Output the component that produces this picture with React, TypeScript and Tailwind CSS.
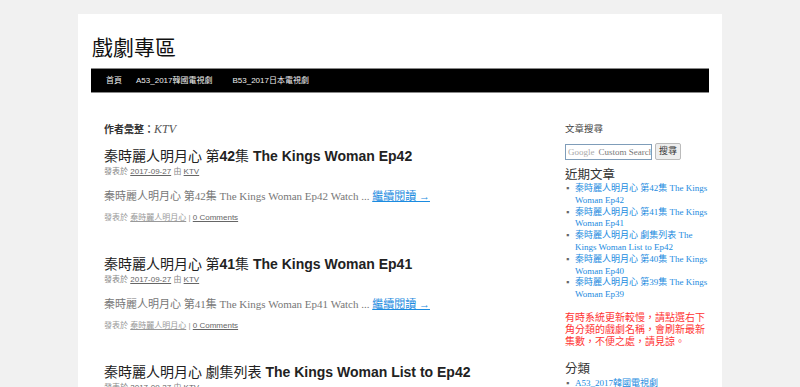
const serif = "font-['Liberation_Serif','Noto_Sans_CJK_TC',serif]";
const sans = "font-['Liberation_Sans','Noto_Sans_CJK_TC',sans-serif]";

type Post = { cjk: string; ep?: string; tail?: string; en: string; excerpt: string; hasEx: boolean };

const posts: Post[] = [
  { cjk: "秦時麗人明月心 第", ep: "42", tail: "集", en: "The Kings Woman Ep42", excerpt: "秦時麗人明月心 第42集 The Kings Woman Ep42 Watch ...", hasEx: true },
  { cjk: "秦時麗人明月心 第", ep: "41", tail: "集", en: "The Kings Woman Ep41", excerpt: "秦時麗人明月心 第41集 The Kings Woman Ep41 Watch ...", hasEx: true },
  { cjk: "秦時麗人明月心 劇集列表", en: "The Kings Woman List to Ep42", excerpt: "", hasEx: false },
];

const recent = [
  "秦時麗人明月心 第42集 The Kings Woman Ep42",
  "秦時麗人明月心 第41集 The Kings Woman Ep41",
  "秦時麗人明月心 劇集列表 The Kings Woman List to Ep42",
  "秦時麗人明月心 第40集 The Kings Woman Ep40",
  "秦時麗人明月心 第39集 The Kings Woman Ep39",
];

function PostItem({ p }: { p: Post }) {
  return (
    <article className="mb-[31px]">
      <h2 className="text-[14px] leading-[18px] text-[#222]">
        <span className={`${serif} font-normal`}>{p.cjk}</span>
        {p.ep && <span className={`${sans} font-bold`}>{p.ep}</span>}
        {p.tail && <span className={`${serif} font-normal`}>{p.tail}</span>}
        <span className={`${sans} font-bold`}> {p.en}</span>
      </h2>
      <div className={`${sans} text-[8px] leading-[12px] text-[#888]`}>
        發表於 <a className="text-[#666] underline">2017-09-27</a> 由 <a className="text-[#666] underline">KTV</a>
      </div>
      {p.hasEx && (
        <>
          <p className={`${serif} mt-[11px] text-[11px] leading-[14px] text-[#777]`}>
            {p.excerpt} <a className="text-[#1b8be0] underline">繼續閱讀 →</a>
          </p>
          <div className={`${sans} mt-[9px] text-[8px] leading-[12px] text-[#999]`}>
            發表於 <a className="text-[#999] underline">秦時麗人明月心</a> | <a className="text-[#666] underline">0 Comments</a>
          </div>
        </>
      )}
    </article>
  );
}

export default function App() {
  return (
    <div className="min-h-screen bg-[#f1f1f1] pt-[14px]">
      <div className="mx-auto w-[644px] bg-white px-[13px] pb-10">
        <header className="pt-[21px]">
          <h1 className={`${serif} text-[21px] leading-[26px] text-[#111] pl-[1px]`}>戲劇專區</h1>
          <nav className={`${sans} mt-[7px] flex h-[25px] items-center border-y border-[#888] bg-black pl-[15px] text-[8px] text-[#eee]`}>
            <a className="mr-[14px]">首頁</a>
            <a className="mr-[20px]">A53_2017韓國電視劇</a>
            <a>B53_2017日本電視劇</a>
          </nav>
        </header>
        <div className="flex pt-[29px]">
          <main className="w-[420px] shrink-0 pl-[13px]">
            <h3 className={`${sans} text-[10px] leading-[14px] font-bold text-[#333]`}>
              作者彙整：<span className={`${serif} italic font-normal text-[12px] text-[#555]`}>KTV</span>
            </h3>
            <div className="mt-[10px]">
              {posts.map((p, i) => (
                <PostItem key={i} p={p} />
              ))}
            </div>
          </main>
          <aside className="ml-[54px] w-[144px] shrink-0">
            <h3 className={`${sans} text-[9.5px] leading-[14px] text-[#444]`}>文章搜尋</h3>
            <div className="mt-[7px] flex items-center gap-[3px]">
              <div className={`${serif} h-[16px] w-[87px] overflow-hidden whitespace-nowrap border border-[#7f9db9] px-[2px] text-[9px] leading-[14px]`}>
                <span className="text-[#aaa]">Google</span>
                <span className="ml-[4px] text-[#777]">Custom Search</span>
              </div>
              <button className={`${sans} h-[17px] w-[26px] rounded-[2px] border border-[#bbb] bg-[#eee] text-[9px] text-[#333]`}>搜尋</button>
            </div>
            <h3 className={`${serif} mt-[7px] text-[12.5px] leading-[16px] text-[#333]`}>近期文章</h3>
            <ul className={`${serif} text-[9px] leading-[11.8px] text-[#1b8be0]`}>
              {recent.map((r, i) => (
                <li key={i} className="flex">
                  <span className="w-[10px] shrink-0 pl-[1px] text-[#666]">▪</span>
                  <a>{r}</a>
                </li>
              ))}
            </ul>
            <p className={`${sans} mt-[11px] text-[10px] leading-[12px] text-[#f33]`}>
              有時系統更新較慢，請點選右下角分類的戲劇名稱，會刷新最新集數，不便之處，請見諒。
            </p>
            <h3 className={`${serif} mt-[13px] text-[12.5px] leading-[16px] text-[#333]`}>分類</h3>
            <ul className={`${serif} text-[9px] leading-[12px] text-[#1b8be0]`}>
              <li className="flex">
                <span className="w-[10px] shrink-0 pl-[1px] text-[#666]">▪</span>
                <a>A53_2017韓國電視劇</a>
              </li>
              <li className="flex">
                <span className="w-[10px] shrink-0 pl-[1px] text-[#666]">▪</span>
                <a>B53_2017日本電視劇</a>
              </li>
            </ul>
          </aside>
        </div>
      </div>
    </div>
  );
}
